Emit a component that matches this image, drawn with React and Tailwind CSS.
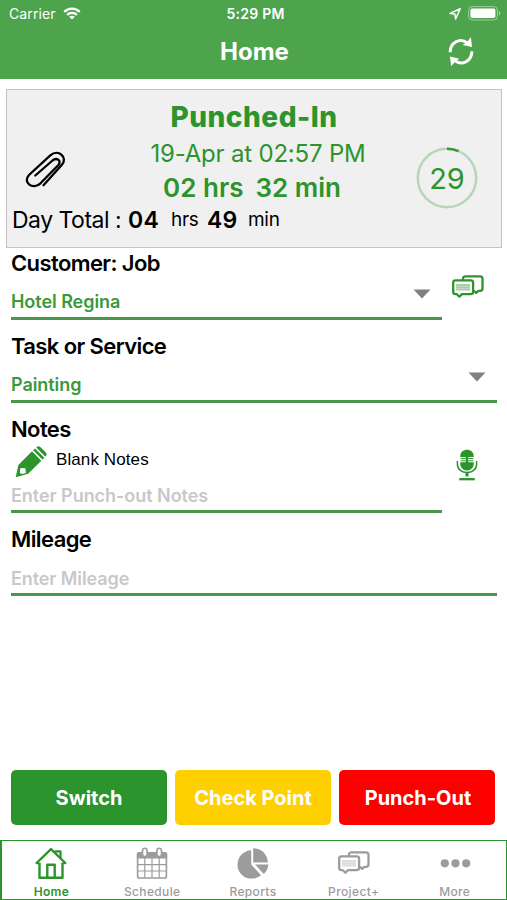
import React, { useState } from 'react';

const TABS = [
  { id: 'home', label: 'Home', Icon: HomeIcon, text: 'tracking-[0.3px]' },
  { id: 'schedule', label: 'Schedule', Icon: CalendarIcon, text: 'tracking-[0.35px]' },
  { id: 'reports', label: 'Reports', Icon: PieIcon, text: 'tracking-[0.35px]' },
  { id: 'project', label: 'Project+', Icon: ChatIcon, text: 'tracking-[0.4px]' },
  { id: 'more', label: 'More', Icon: MoreIcon, text: 'tracking-[0.3px]' },
];

function WifiIcon() {
  return (
    <svg width="18" height="13" viewBox="0 0 18 13" fill="none" stroke="#fff" strokeWidth="2.3">
      <path d="M1.2 4.9C5.6.6 12.4.6 16.8 4.9" />
      <path d="M4.1 7.9c2.8-2.7 7-2.7 9.8 0" />
      <path d="M9 12.6 6.2 9.8c1.6-1.5 4-1.5 5.6 0z" fill="#fff" stroke="none" />
    </svg>
  );
}

function LocationIcon() {
  return (
    <svg width="12" height="12" viewBox="0 0 12 12" fill="none" stroke="#fff" strokeWidth="1.5" strokeLinejoin="round">
      <path d="M11.2.8 1 5.4l4.9.7.7 4.9z" />
    </svg>
  );
}

function BatteryIcon() {
  return (
    <svg width="33" height="15" viewBox="0 0 33 15" fill="none">
      <rect x="0.6" y="0.6" width="28.8" height="13.4" rx="3.6" stroke="#fff" strokeOpacity="0.45" />
      <rect x="2.4" y="2.6" width="25" height="9.4" rx="1.8" fill="#fff" />
      <path d="M31 5.2c1.6.6 1.6 3.6 0 4.2z" fill="#fff" fillOpacity="0.6" />
    </svg>
  );
}

function RefreshIcon() {
  return (
    <svg width="26" height="30" viewBox="0 0 26 30" fill="none" stroke="#fff" strokeWidth="3">
      <path d="M2.1 15.2C2.3 5.6 11.6.4 19.5 6" />
      <path d="M23.9 14.4C23.7 24 14.4 29.2 6.5 23.6" />
      <path d="M22.9.3 24 10l-9.4-2.1 4.2-2.7z" fill="#fff" stroke="none" />
      <path d="M3.1 29.3 2 19.6l9.4 2.1-4.2 2.7z" fill="#fff" stroke="none" />
    </svg>
  );
}

function ClipIcon() {
  return (
    <svg width="42" height="38" viewBox="0 0 42 38" fill="none" stroke="#000" strokeWidth="2.3" strokeLinecap="round" strokeLinejoin="round">
      <path d="M10.300 24.500 27.500 9.500C31.800 6 37 9.700 33.400 14L15.500 32.300C8 39.500-3 31.500 4 24L25.300 4.400C33.500-2.600 43.500 6.500 36.700 14.100L18.500 34.200" />
    </svg>
  );
}

function ChatIcon({ className, lines = '#a9cda7' }) {
  return (
    <svg className={className} width="32" height="24" viewBox="0 0 32 24" fill="none" stroke="currentColor" strokeWidth="2.3" strokeLinejoin="round">
      <path d="M11 5V3.600C11 2.300 12 1.300 13.300 1.300H28c1.400 0 2.500 1 2.500 2.400v9.800c0 1.400-1 2.300-2.400 2.300h-1.600l-2.400 2.100-2.100-2.100" />
      <path d="M3.500 5.300h15.200c1.400 0 2.400 1 2.400 2.300v9.200c0 1.400-1 2.400-2.400 2.400H10l-2.600 2.500-2.500-2.500H3.500c-1.400 0-2.300-1-2.300-2.400V7.600c0-1.300.9-2.300 2.300-2.300z" />
      <path d="M4 9.900h14M4 12.200h14M4 14.500h14" stroke={lines} strokeWidth="2" />
    </svg>
  );
}

function PencilIcon() {
  return (
    <svg width="32" height="32" viewBox="0 0 32 32" fill="#2c942c">
      <path fillRule="evenodd" d="M17 5.300 26.300 14.700 13.200 27.800.7 31.200 3.400 18.900zM5.400 22 4.700 26.900l2.600 1 3.600-1-.5-4.700z" />
      <path d="m18.200 4.200 1.900-1.700 9.200 9.300-1.900 1.800z" />
      <path d="m21.300 1.500.5-.5c1-1 2.500-1 3.500 0l5.500 5.400c1 1 1 2.500 0 3.500l-.6.7z" />
    </svg>
  );
}

function MicIcon() {
  return (
    <svg width="22" height="32" viewBox="0 0 22 32" fill="none" stroke="#2c942c">
      <path d="M4.300 8V7C4.300-1.300 17.700-1.300 17.700 7v1zM4.300 13.300h13.400v1.500c0 9-13.400 9-13.400 0z" fill="#2c942c" stroke="none" />
      <path d="M4.700 9.500h4.800M4.700 11.800h4.800M12.500 9.500h4.800M12.500 11.800h4.800" strokeWidth="1.100" />
      <path d="M11 7.500v6.500" strokeWidth="2.600" />
      <path d="M1.400 12v3.200c0 11 19.200 11 19.200 0V12" strokeWidth="1.500" />
      <path d="M11 23.500v4" strokeWidth="3" />
      <path d="M3.200 30.200h15.600" strokeWidth="2.300" />
    </svg>
  );
}

function HomeIcon() {
  return (
    <svg width="32" height="32" viewBox="0 0 32 32" fill="none" stroke="currentColor" strokeWidth="2.4" strokeLinejoin="round">
      <path d="M4.200 16H1.600L16 2.100 30.300 16h-2.500" />
      <path d="M4.500 15.800V30.700h23V15.800" />
      <path d="M12.300 30.500V17.700h7.400v12.800" />
      <path d="M20.500 6.300V4.300h5v6.900" strokeWidth="2.200" />
    </svg>
  );
}

function CalendarIcon() {
  return (
    <svg width="32" height="32" viewBox="0 0 32 32" fill="none" stroke="currentColor">
      <path d="M2.800 5h26.400c1.300 0 2 .8 2 2v4.500H.8V7c0-1.200.7-2 2-2z" fill="currentColor" stroke="none" />
      <rect x="1.600" y="6" width="28.800" height="25" rx="1.800" strokeWidth="1.600" />
      <path d="M2 17.700h28M2 24h28M8.800 10.500v20M16 10.500v20M23.200 10.500v20" strokeWidth="1.200" />
      <rect x="6.500" y="1.200" width="4.600" height="8.300" rx="2.300" fill="#fff" strokeWidth="1.600" />
      <rect x="20.900" y="1.200" width="4.600" height="8.300" rx="2.300" fill="#fff" strokeWidth="1.600" />
    </svg>
  );
}

function PieIcon() {
  return (
    <svg width="32" height="32" viewBox="0 0 32 32" fill="currentColor">
      <path d="M14.200 3.300V17.500L24 28.200C14 36 .5 29.500.5 17.700.5 9.500 7 3.500 14.200 3.300z" />
      <path d="M16.200 1.300C24.500 1.300 30.600 7.500 30.800 15.500H16.200z" />
      <path d="M18 17.600h13.300c-.2 3.700-1.900 7-4.500 9.400z" />
    </svg>
  );
}

function MoreIcon() {
  return (
    <svg width="32" height="32" viewBox="0 0 32 32" fill="currentColor">
      <circle cx="5.800" cy="16.300" r="4.100" />
      <circle cx="16.500" cy="16.300" r="4.100" />
      <circle cx="27.200" cy="16.300" r="4.100" />
    </svg>
  );
}

function Caret() {
  return (
    <svg className="mt-[1px]" width="18" height="10" viewBox="0 0 18 10">
      <path d="M.5.5h17L9 9.500z" fill="#808080" />
    </svg>
  );
}

function SecondsRing({ value }) {
  return (
    <div className="relative flex h-[62px] w-[62px] items-center justify-center">
      <svg className="absolute inset-0" width="62" height="62" viewBox="0 0 62 62" fill="none" strokeWidth="2.500">
        <circle cx="31" cy="31" r="29.200" stroke="#b7d6b7" />
        <path d="M31 1.800A29.200 29.200 0 0 1 42.500 4.200" stroke="#3a933a" />
      </svg>
      <span className="pt-[1px] text-[29px] text-[#2c942c]">{value}</span>
    </div>
  );
}

function Label({ children }) {
  return (
    <h2 className="h-7 pt-[1px] text-[22px] leading-7 font-semibold tracking-[-0.6px] whitespace-nowrap text-black">
      {children}
    </h2>
  );
}

export default function App() {
  const [tab, setTab] = useState('home');

  return (
    <div className="flex h-[900px] w-[507px] flex-col overflow-hidden bg-white font-['Inter',sans-serif]">
      <header className="h-[79px] shrink-0 bg-[#4da44d] text-white">
        <div className="grid h-[27px] grid-cols-3 items-center pr-[6px] pl-[9px]">
          <div className="flex items-center gap-[7px] text-[14px] tracking-[0.1px]">
            Carrier
            <WifiIcon />
          </div>
          <span className="pl-[1px] text-center text-[14px] font-semibold tracking-[0.25px]">5:29 PM</span>
          <div className="flex items-center justify-end gap-[7px]">
            <LocationIcon />
            <BatteryIcon />
          </div>
        </div>
        <div className="grid h-[50px] grid-cols-[62px_1fr_60px] items-center">
          <h1 className="col-start-2 text-center text-[24px] leading-8 font-bold">Home</h1>
          <button className="ml-[1px]" aria-label="Refresh">
            <RefreshIcon />
          </button>
        </div>
      </header>

      <section className="mr-[5px] ml-[6px] mt-[10px] flex h-[159px] shrink-0 flex-col border border-[#c4c4c4] bg-[#f0f0f0] px-[5px]">
        <div className="grid h-[114px] grid-cols-[90px_1fr_90px] grid-rows-[114px]">
          <div className="flex items-end pb-[15px] pl-[13px]">
            <ClipIcon />
          </div>
          <div className="flex flex-col items-center whitespace-nowrap text-[#2c942c]">
            <p className="mt-[7px] h-[39px] text-[28px] leading-10 font-extrabold tracking-[0.5px]">Punched-In</p>
            <p className="h-[34px] pt-[1px] pl-2 text-[24px] leading-[34px] tracking-[-0.2px]">19-Apr at 02:57 PM</p>
            <p className="flex h-[34px] gap-[12px] pt-[1px] pr-[4px] text-[26px] leading-[34px] font-semibold">
              <span>02 hrs</span>
              <span>32 min</span>
            </p>
          </div>
          <div className="flex justify-end pt-[57px] pr-[18px]">
            <SecondsRing value={29} />
          </div>
        </div>
        <p className="flex h-8 items-center text-[23px] leading-8 whitespace-nowrap text-black">
          <span className="w-[116px] tracking-[-0.5px]">Day Total :</span>
          <span className="w-[43px] font-semibold tracking-[0.3px]">04</span>
          <span className="w-[36px] text-[19px] tracking-[-0.3px]">hrs</span>
          <span className="w-[41px] font-semibold tracking-[0.3px]">49</span>
          <span className="text-[19px] tracking-[-0.3px]">min</span>
        </p>
      </section>

      <main className="flex flex-1 flex-col px-[11px]">
        <div className="flex h-[72px]">
          <div className="flex w-[431px] flex-col border-b-[3px] border-[#4a964a]">
            <Label>Customer: Job</Label>
            <div className="flex flex-1 justify-between pt-[12px] pr-[11px]">
              <span className="pt-[2px] text-[18px] leading-6 font-semibold tracking-[-0.05px] text-[#3a993a]">Hotel Regina</span>
              <Caret />
            </div>
          </div>
          <div className="pt-[27px] pl-[10px]">
            <ChatIcon className="text-[#2c942c]" />
          </div>
        </div>

        <div className="mt-[11px] flex h-[72px] w-[486px] flex-col border-b-[3px] border-[#4a964a]">
          <Label>Task or Service</Label>
          <div className="flex flex-1 justify-between pt-[12px] pr-[11px]">
            <span className="pt-[2px] text-[18px] leading-6 font-semibold tracking-[-0.05px] text-[#3a993a]">Painting</span>
            <Caret />
          </div>
        </div>

        <div className="mt-[11px] flex h-[99px]">
          <div className="flex w-[431px] flex-col border-b-[3px] border-[#4a964a]">
            <Label>Notes</Label>
            <div className="flex h-[41px] gap-[9px] pt-[4px] pl-1">
              <PencilIcon />
              <span className="font-['Liberation_Sans',sans-serif] text-[17px] leading-7 tracking-[0.1px] text-black">
                Blank Notes
              </span>
            </div>
            <span className="pt-[1px] text-[18px] leading-6 font-semibold tracking-[-0.05px] text-[#c8c8cb]">Enter Punch-out Notes</span>
          </div>
          <div className="pt-[35px] pl-[14px]">
            <MicIcon />
          </div>
        </div>

        <div className="mt-[11px] flex h-[72px] w-[486px] flex-col border-b-[3px] border-[#4a964a]">
          <Label>Mileage</Label>
          <span className="pt-[15px] text-[18px] leading-6 font-semibold tracking-[-0.1px] text-[#c8c8cb]">Enter Mileage</span>
        </div>

        <div className="mt-auto mb-[15px] grid h-[55px] w-[484px] grid-cols-3 gap-2 text-[20px] font-bold text-white">
          <button className="rounded-[5px] bg-[#2c942c]">Switch</button>
          <button className="rounded-[5px] bg-[#ffd000]">Check Point</button>
          <button className="rounded-[5px] bg-[#ff0000] pl-[2px]">Punch-Out</button>
        </div>
      </main>

      <nav className="grid h-[60px] shrink-0 grid-cols-5 border-t border-r border-b border-l-2 border-[#2c942c]">
        {TABS.map(({ id, label, Icon, text }) => (
          <button
            key={id}
            onClick={() => setTab(id)}
            className={`flex flex-col items-center pt-[6px] pr-[2px] ${tab === id ? 'font-semibold text-[#2c942c]' : 'font-medium text-[#9c9c9c]'}`}
          >
            <span className="flex h-8 items-center">
              <Icon lines="#dcdcdc" />
            </span>
            <span className={`mt-[5px] text-[12px] leading-4 ${text}`}>{label}</span>
          </button>
        ))}
      </nav>
    </div>
  );
}
